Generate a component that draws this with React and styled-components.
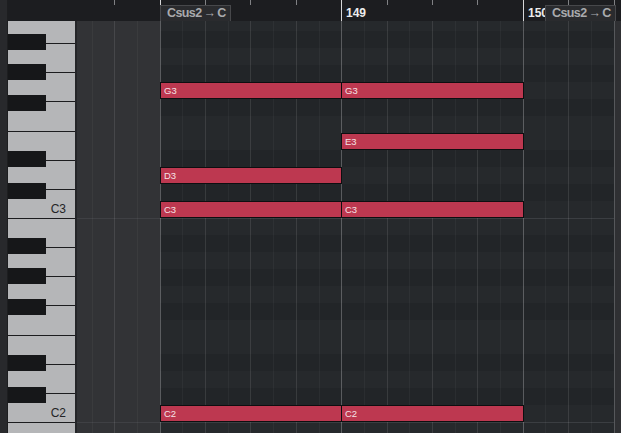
import React from "react";
import styled, { createGlobalStyle } from "styled-components";

const GlobalStyle = createGlobalStyle`
  html, body {
    margin: 0;
    padding: 0;
    background: #1c1d20;
  }
  body {
    font-family: "Liberation Sans", Arial, sans-serif;
  }
`;

// timeline geometry: bar 148 starts at x 160, one eighth is ~22.69px
const ORIGIN = 160.2;
const EIGHTH = 22.69;
const LANE_LEFT = 77;
const ROW_H = 17;
const SCROLL = 7;
const TOP_SEMI = 11; // B3, counted from C3
const BOTTOM_SEMI = -13;

const xAt = (eighths) => Math.floor(ORIGIN + eighths * EIGHTH);

const BLACK = [1, 3, 6, 8, 10];
const isBlack = (semi) => BLACK.includes(((semi % 12) + 12) % 12);
const isB = (semi) => ((semi % 12) + 12) % 12 === 11;

const notes = [
  { name: "G3", semi: 7, start: 0, len: 8 },
  { name: "G3", semi: 7, start: 8, len: 8 },
  { name: "E3", semi: 4, start: 8, len: 8 },
  { name: "D3", semi: 2, start: 0, len: 8 },
  { name: "C3", semi: 0, start: 0, len: 8 },
  { name: "C3", semi: 0, start: 8, len: 8 },
  { name: "C2", semi: -12, start: 0, len: 8 },
  { name: "C2", semi: -12, start: 8, len: 8 },
];

const chords = [
  { label: "Csus2 \u2192 C", at: 0 },
  { label: "Csus2 \u2192 C", at: 17 },
];

// bar 148's number sits under the first chord event, so only these show
const bars = [
  { num: 149, at: 8 },
  { num: 150, at: 16 },
];

// visible octaves, top to bottom; the lowest one is only peeking in
const octaves = [
  { num: 3, label: true },
  { num: 2, label: true },
  { num: 1, label: false },
];

// black keys inside one 204px octave, from the top (A#, G#, F#, D#, C#)
const blackTops = [20, 50, 81, 137, 169];
const whiteNames = ["B", "A", "G", "F", "E", "D", "C"];

const Frame = styled.div`
  display: flex;
  width: 621px;
  height: 433px;
  overflow: hidden;
  background: #1c1d20;
`;

const LeftStrip = styled.div`
  width: 8px;
  flex: none;
  background: #28292c;
  box-shadow: inset -1px 0 0 #1d1e20;
`;

const Main = styled.div`
  flex: 1;
  display: flex;
  flex-direction: column;
  min-width: 0;
`;

const Ruler = styled.div`
  display: flex;
  height: 21px;
  flex: none;
  background: #1c1d20;
`;

const RulerCorner = styled.div`
  width: 69px;
  flex: none;
`;

const Timeline = styled.div`
  position: relative;
  flex: 1;
  overflow: hidden;
`;

const Tick = styled.div`
  position: absolute;
  top: 0;
  width: 1px;
  height: ${(p) => (p.$bar ? "21px" : "5px")};
  background: ${(p) => (p.$bar ? "#d6d7d9" : "#808184")};
`;

const BarNumber = styled.span`
  position: absolute;
  top: 7px;
  font-size: 12px;
  line-height: 12px;
  font-weight: bold;
  color: #ececec;
`;

const ChordEvent = styled.div`
  position: absolute;
  top: 5px;
  height: 16px;
  box-sizing: border-box;
  padding: 0 4px 0 6px;
  border: 1px solid #47484b;
  border-bottom: none;
  background: #2a2b2e;
  color: #a9aaad;
  font-weight: bold;
  font-size: 12.5px;
  line-height: 14px;
  letter-spacing: -0.6px;
  word-spacing: -1px;
  white-space: nowrap;
`;

const Body = styled.div`
  flex: 1;
  display: flex;
  min-height: 0;
`;

const Keyboard = styled.div`
  width: 67px;
  flex: none;
  overflow: hidden;
  background: #b5b6b8;
`;

const Octave = styled.div`
  position: relative;
  height: 204px;
  flex: none;
  display: flex;
  flex-direction: column;

  &:first-child {
    margin-top: -${SCROLL}px;
  }
`;

const WhiteKey = styled.div`
  flex: 1;
  box-sizing: border-box;
  border-top: 1px solid #1c1c1e;
  display: flex;
  align-items: flex-end;
  justify-content: flex-end;
  padding: 0 9px 3px 0;
  font-size: 12px;
  line-height: 12px;
  color: #242426;
`;

const BlackKey = styled.div`
  position: absolute;
  left: 0;
  top: ${(p) => p.$top}px;
  width: 38px;
  height: 16px;
  background: #161719;
`;

const KeyEdge = styled.div`
  width: 2px;
  flex: none;
  background: #242528;
`;

const Lanes = styled.div`
  position: relative;
  width: 537px;
  flex: none;
  overflow: hidden;
`;

const RowStack = styled.div`
  display: flex;
  flex-direction: column;
  margin-top: -${SCROLL}px;
`;

const Row = styled.div`
  display: flex;
  height: ${ROW_H}px;
  flex: none;
`;

const PreCell = styled.div`
  width: 83px;
  flex: none;
  background: #323336;
  box-shadow: ${(p) => (p.$octave ? "inset 0 1px 0 #3f4044" : "none")};
`;

const Cell = styled.div`
  flex: 1;
  background: ${(p) => (p.$black ? "#222528" : "#26292c")};
  box-shadow: ${(p) => (p.$octave ? "inset 0 1px 0 #3b3e42" : "none")};
`;

const lineColors = {
  eighth: "rgba(255, 255, 255, 0.04)",
  beat: "rgba(255, 255, 255, 0.1)",
  bar: "rgba(255, 255, 255, 0.25)",
};

const GridLine = styled.div`
  position: absolute;
  top: 0;
  bottom: 0;
  width: 1px;
  background: ${(p) => lineColors[p.$kind]};
`;

const Note = styled.div`
  position: absolute;
  height: ${ROW_H}px;
  box-sizing: border-box;
  border: 1px solid #0e0e10;
  background: #bd3850;
  color: #f5e2e6;
  font-size: 9.5px;
  line-height: 10px;
  display: flex;
  align-items: center;
  padding-left: 3px;
`;

const Scrollbar = styled.div`
  width: 7px;
  flex: none;
  box-sizing: border-box;
  border-left: 1px solid #56585b;
  background: #2f3033;
`;

const rowTop = (semi) => (TOP_SEMI - semi) * ROW_H - SCROLL;

function PianoKeys() {
  return (
    <Keyboard>
      {octaves.map((oct) => (
        <Octave key={oct.num}>
          {whiteNames.map((n) => (
            <WhiteKey key={n}>{n === "C" && oct.label ? `C${oct.num}` : null}</WhiteKey>
          ))}
          {blackTops.map((t) => (
            <BlackKey key={t} $top={t} />
          ))}
        </Octave>
      ))}
    </Keyboard>
  );
}

function RulerBar() {
  const ticks = [];
  for (let k = -2; k <= 20; k += 2) ticks.push(k);
  return (
    <Ruler>
      <RulerCorner />
      <Timeline>
        {ticks.map((k) => (
          <Tick key={k} $bar={k % 8 === 0} style={{ left: xAt(k) - LANE_LEFT }} />
        ))}
        {bars.map((b) => (
          <BarNumber key={b.num} style={{ left: xAt(b.at) - LANE_LEFT + 5 }}>
            {b.num}
          </BarNumber>
        ))}
        {chords.map((c) => (
          <ChordEvent key={c.at} style={{ left: xAt(c.at) - LANE_LEFT }}>
            {c.label}
          </ChordEvent>
        ))}
      </Timeline>
    </Ruler>
  );
}

function NoteLanes() {
  const rows = [];
  for (let s = TOP_SEMI; s >= BOTTOM_SEMI; s--) rows.push(s);
  const lines = [];
  for (let k = -3; k <= 20; k++) {
    const kind = k % 8 === 0 ? "bar" : k % 2 === 0 ? "beat" : "eighth";
    lines.push({ k, kind });
  }
  return (
    <Lanes>
      <RowStack>
        {rows.map((s) => (
          <Row key={s}>
            <PreCell $octave={isB(s)} />
            <Cell $black={isBlack(s)} $octave={isB(s)} />
          </Row>
        ))}
      </RowStack>
      {lines.map((l) => (
        <GridLine key={l.k} $kind={l.kind} style={{ left: xAt(l.k) - LANE_LEFT }} />
      ))}
      {notes.map((n, i) => {
        const left = xAt(n.start);
        const right = xAt(n.start + n.len);
        return (
          <Note
            key={i}
            style={{
              left: left - LANE_LEFT,
              width: right - left + 1,
              top: rowTop(n.semi),
            }}
          >
            {n.name}
          </Note>
        );
      })}
    </Lanes>
  );
}

export default function App() {
  return (
    <>
      <GlobalStyle />
      <Frame>
        <LeftStrip />
        <Main>
          <RulerBar />
          <Body>
            <PianoKeys />
            <KeyEdge />
            <NoteLanes />
            <Scrollbar />
          </Body>
        </Main>
      </Frame>
    </>
  );
}
